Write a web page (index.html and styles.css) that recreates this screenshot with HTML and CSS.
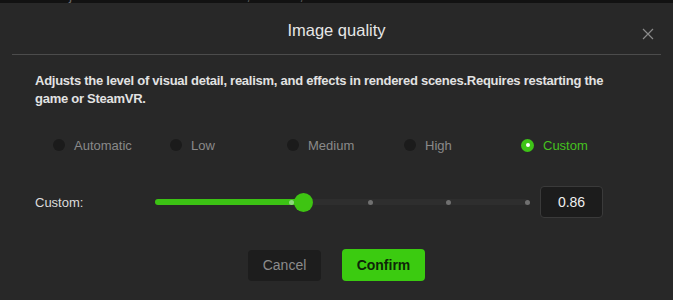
FILE: index.html
```html
<!DOCTYPE html>
<html>
<head>
<meta charset="utf-8">
<link rel="stylesheet" href="styles.css">
</head>
<body>
<div class="backdrop">
  <div class="backdrop-text">
    <span class="bt-left">Adjusts the level of visual detail, realism, and effects in rendered</span>
    <span class="bt-right">Custom</span>
  </div>
</div>
<div class="dialog">
  <div class="header">
    <div class="title">Image quality</div>
    <svg class="close" width="12" height="12" viewBox="0 0 12 12"><path d="M1 1L11 11M11 1L1 11" stroke="#8a8a8a" stroke-width="1.2" fill="none"/></svg>
  </div>
  <div class="divider"></div>
  <div class="content">
    <p class="desc">Adjusts the level of visual detail, realism, and effects in rendered scenes.Requires restarting the game or SteamVR.</p>
    <div class="radios">
      <div class="radio"><span class="dot"></span><span class="label">Automatic</span></div>
      <div class="radio"><span class="dot"></span><span class="label">Low</span></div>
      <div class="radio"><span class="dot"></span><span class="label">Medium</span></div>
      <div class="radio"><span class="dot"></span><span class="label">High</span></div>
      <div class="radio active"><span class="dot"></span><span class="label">Custom</span></div>
    </div>
    <div class="slider-row">
      <span class="slider-label">Custom:</span>
      <div class="slider">
        <div class="track"></div>
        <div class="fill" style="width:148px"></div>
        <span class="tick t-green" style="left:136px"></span>
        <span class="tick" style="left:215px"></span>
        <span class="tick" style="left:293px"></span>
        <span class="tick" style="left:372px"></span>
        <span class="thumb" style="left:148px"></span>
      </div>
      <div class="value">0.86</div>
    </div>
    <div class="buttons">
      <button class="btn cancel">Cancel</button>
      <button class="btn confirm">Confirm</button>
    </div>
  </div>
</div>
</body>
</html>
```

FILE: styles.css
```css
* { box-sizing: border-box; }
html, body {
  margin: 0;
  padding: 0;
  width: 673px;
  height: 300px;
  overflow: hidden;
  background: #141414;
  font-family: "Liberation Sans", Arial, sans-serif;
}
.backdrop {
  height: 3px;
  overflow: hidden;
  background: #121212;
}
.backdrop-text {
  display: flex;
  margin-top: -13px;
  line-height: 16px;
  font-size: 14px;
  color: #6a6a6a;
}
.bt-left { margin-left: 52px; }
.bt-right { margin-left: 150px; }
.dialog {
  height: 297px;
  background: #282828;
  display: flex;
  flex-direction: column;
}
.header {
  position: relative;
  height: 51px;
  display: flex;
  align-items: center;
  justify-content: center;
}
.title {
  font-size: 16.5px;
  color: #e6e6e6;
  margin-top: 4px;
}
.close {
  position: absolute;
  right: 19px;
  top: 25px;
}
.divider {
  height: 1px;
  background: #4c4c4c;
  margin: 0 12px;
}
.content {
  padding: 0 35px;
  display: flex;
  flex-direction: column;
}
.desc {
  margin: 17px 0 0 0;
  font-size: 13px;
  line-height: 18px;
  color: #e2e2e2;
  font-weight: bold;
  letter-spacing: -0.26px;
}
.radios {
  display: flex;
  margin: 27px 0 0 18px;
  height: 20px;
}
.radio {
  width: 117px;
  display: flex;
  align-items: center;
  gap: 9px;
}
.dot {
  width: 12px;
  height: 12px;
  border-radius: 50%;
  background: #1b1b1b;
  flex: none;
}
.label {
  font-size: 13px;
  color: #8a8a8a;
}
.radio.active .dot {
  width: 13px;
  height: 13px;
  background: #3ec417;
  display: flex;
  align-items: center;
  justify-content: center;
}
.radio.active .dot::after {
  content: "";
  width: 4px;
  height: 4px;
  border-radius: 50%;
  background: #ffffff;
}
.radio.active .label { color: #45c11f; }
.slider-row {
  display: flex;
  align-items: center;
  margin-top: 31px;
  height: 32px;
}
.slider-label {
  width: 120px;
  font-size: 13px;
  color: #dcdcdc;
}
.slider {
  position: relative;
  width: 374px;
  height: 20px;
}
.track {
  position: absolute;
  left: 0;
  right: 0;
  top: 7px;
  height: 6px;
  border-radius: 3px;
  background: #2e2e2e;
}
.fill {
  position: absolute;
  left: 0;
  top: 7px;
  height: 6px;
  border-radius: 3px;
  background: #3cc214;
}
.tick {
  position: absolute;
  top: 7.5px;
  width: 5px;
  height: 5px;
  margin-left: -2.5px;
  border-radius: 50%;
  background: #707070;
}
.tick.t-green { background: #8bd97a; }
.thumb {
  position: absolute;
  top: 1px;
  width: 19px;
  height: 19px;
  margin-left: -9.5px;
  border-radius: 50%;
  background: #3ec412;
}
.value {
  margin-left: 11px;
  width: 63px;
  height: 32px;
  border: 1px solid #3a3a3a;
  border-radius: 4px;
  background: #1c1c1c;
  color: #f0f0f0;
  font-size: 14px;
  display: flex;
  align-items: center;
  justify-content: center;
}
.buttons {
  display: flex;
  justify-content: center;
  align-items: center;
  gap: 21px;
  margin-top: 31px;
}
.btn {
  font-family: "Liberation Sans", Arial, sans-serif;
  border: none;
  border-radius: 4px;
  font-size: 14px;
  padding: 0;
}
.cancel {
  width: 73px;
  height: 31px;
  background: #1d1d1d;
  color: #8c8c8c;
}
.confirm {
  width: 83px;
  height: 32px;
  background: #3bcb10;
  color: #0e2608;
  font-weight: bold;
}
```
